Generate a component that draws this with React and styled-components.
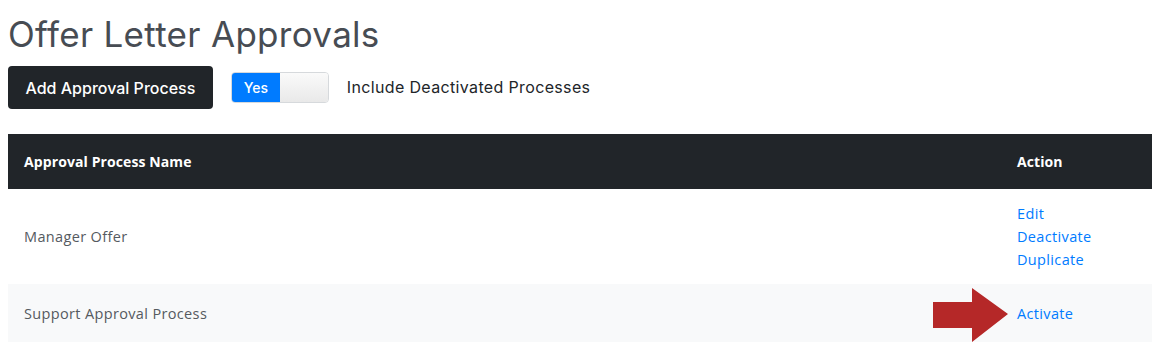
import React from 'react'
import styled, { createGlobalStyle } from 'styled-components'

const GlobalStyle = createGlobalStyle`
  body {
    margin: 0;
    padding: 8px;
    background: #fff;
    font-family: Inter, "Liberation Sans", sans-serif;
    color: #212529;
  }
`

const Title = styled.h1`
  margin: 6px 0 0;
  font-size: 35px;
  font-weight: 400;
  line-height: 40px;
  color: #474c53;
  letter-spacing: 0.3px;
`

const Toolbar = styled.div`
  display: flex;
  align-items: center;
  margin-top: 12px;
  height: 43px;
`

const DarkButton = styled.button`
  height: 43px;
  padding: 0 17.5px;
  border: none;
  border-radius: 4px;
  background: #212529;
  color: #fff;
  font-family: Inter, "Liberation Sans", sans-serif;
  font-size: 16px;
  font-weight: 500;
`

const Toggle = styled.div`
  display: flex;
  width: 98px;
  height: 31px;
  margin-left: 18px;
  border: 1px solid #d6d9dc;
  border-radius: 4px;
  overflow: hidden;
  box-sizing: border-box;
`

const ToggleOn = styled.span`
  width: 48px;
  display: flex;
  align-items: center;
  justify-content: center;
  background: #007bff;
  color: #fff;
  font-size: 14px;
  font-weight: 500;
`

const ToggleHandle = styled.span`
  flex: 1;
  background: linear-gradient(#fafafa, #e9e9e9);
`

const ToggleLabel = styled.span`
  margin-left: 18px;
  margin-top: -2px;
  font-size: 16px;
  letter-spacing: 0.35px;
`

const Table = styled.table`
  width: 100%;
  margin-top: 25px;
  border-collapse: collapse;
  font-family: "Open Sans", "Liberation Sans", sans-serif;
  font-size: 14.5px;
  letter-spacing: 0.35px;
`

const HeadCell = styled.th`
  height: 55px;
  padding: 0 16px;
  background: #212529;
  color: #fff;
  text-align: left;
  font-weight: 700;
  font-size: 14px;
  letter-spacing: 0.1px;
  width: ${p => p.$width || 'auto'};
`

const Row = styled.tr`
  background: ${p => (p.$striped ? '#f8f9fa' : '#fff')};
`

const Cell = styled.td`
  position: relative;
  padding: ${p => p.$pad}px 16px;
  line-height: 23px;
  color: #555a5f;
  vertical-align: middle;
`

const ActionLink = styled.a`
  display: block;
  color: #007bff;
  text-decoration: none;
`

const Arrow = styled.svg`
  position: absolute;
  left: -68px;
  top: 4px;
`

export default function App() {
  return (
    <>
      <GlobalStyle />
      <Title>Offer Letter Approvals</Title>
      <Toolbar>
        <DarkButton>Add Approval Process</DarkButton>
        <Toggle>
          <ToggleOn>Yes</ToggleOn>
          <ToggleHandle />
        </Toggle>
        <ToggleLabel>Include Deactivated Processes</ToggleLabel>
      </Toolbar>
      <Table>
        <thead>
          <tr>
            <HeadCell>Approval Process Name</HeadCell>
            <HeadCell $width="119px">Action</HeadCell>
          </tr>
        </thead>
        <tbody>
          <Row>
            <Cell $pad={13}>Manager Offer</Cell>
            <Cell $pad={13}>
              <ActionLink href="#">Edit</ActionLink>
              <ActionLink href="#">Deactivate</ActionLink>
              <ActionLink href="#">Duplicate</ActionLink>
            </Cell>
          </Row>
          <Row $striped>
            <Cell $pad={17.5}>Support Approval Process</Cell>
            <Cell $pad={17.5}>
              <Arrow width="76" height="54" viewBox="0 0 76 54">
                <polygon points="0,14 39,14 39,0 75,26 39,54 39,40 0,40" fill="#b52828" />
              </Arrow>
              <ActionLink href="#">Activate</ActionLink>
            </Cell>
          </Row>
        </tbody>
      </Table>
    </>
  )
}
